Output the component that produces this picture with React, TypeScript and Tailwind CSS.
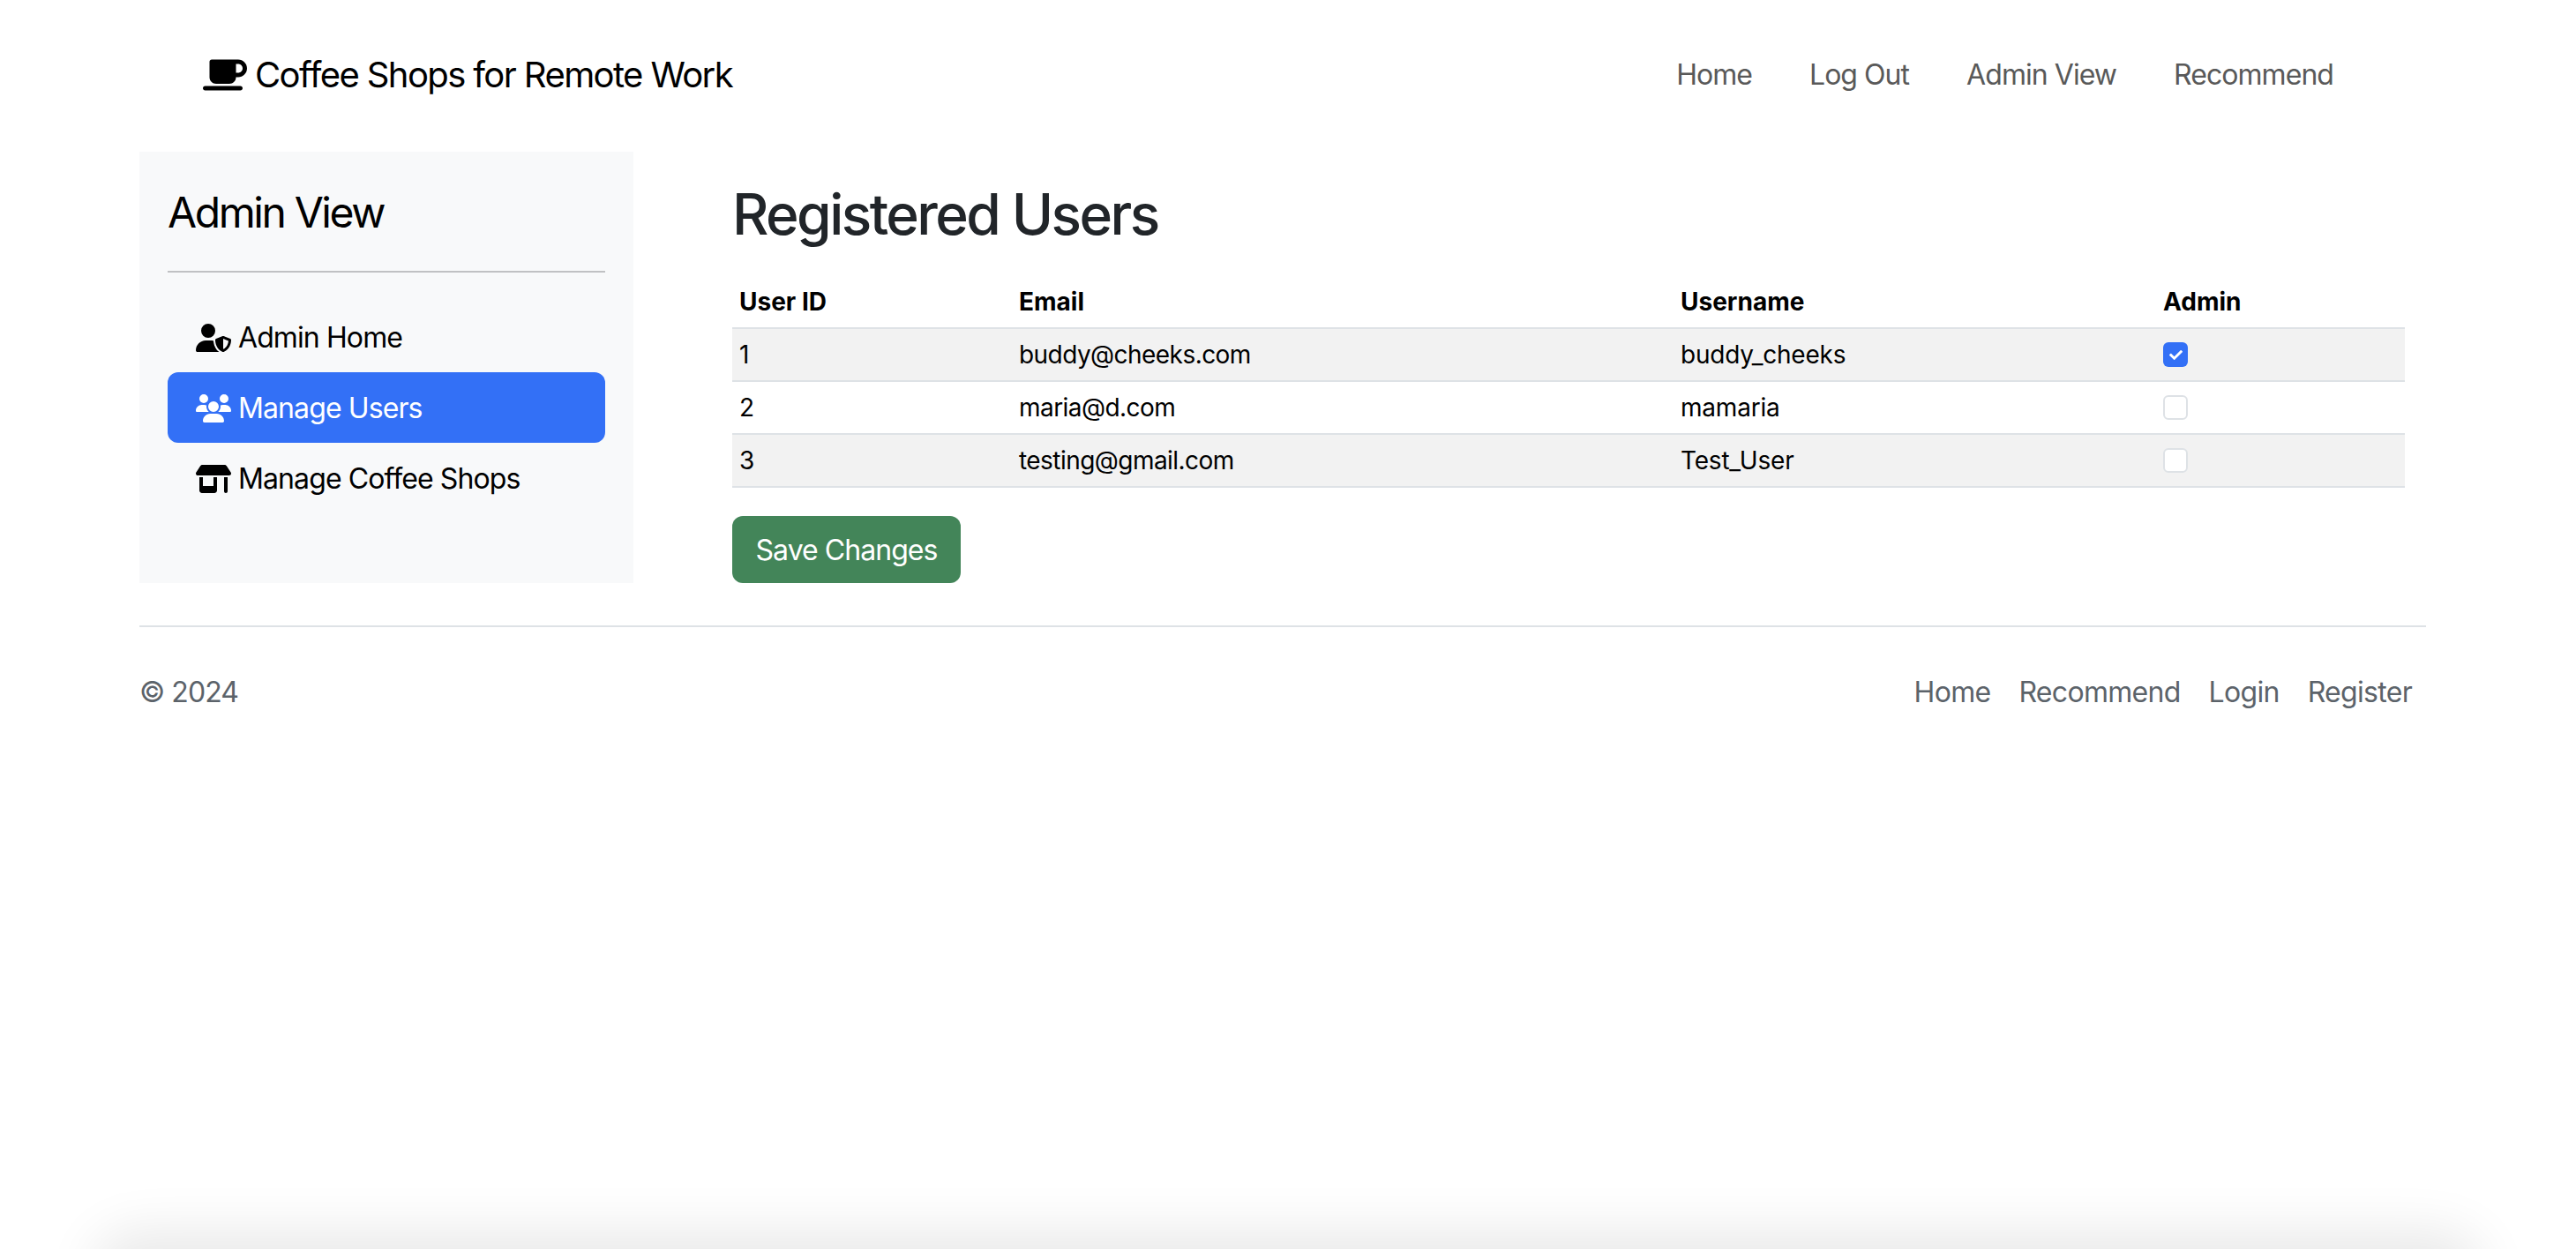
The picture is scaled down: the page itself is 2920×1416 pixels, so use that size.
import { FaMugSaucer, FaShop, FaUsers, FaUserShield } from "react-icons/fa6"
import { FaCheck } from "react-icons/fa"

const users = [
  { id: 1, email: "buddy@cheeks.com", username: "buddy_cheeks", admin: true },
  { id: 2, email: "maria@d.com", username: "mamaria", admin: false },
  { id: 3, email: "testing@gmail.com", username: "Test_User", admin: false },
]

export default function App() {
  return (
    <div className="relative h-[1416px] overflow-hidden bg-white font-['Inter',sans-serif] text-[32px] leading-[48px] tracking-[-0.95px] text-black">
      {/* Top nav */}
      <header className="flex h-[172px] items-center justify-between pb-[3px] pl-[230px] pr-[275px]">
        <div className="flex items-center gap-[9px] text-[40px] tracking-[-1.6px]">
          <FaMugSaucer className="h-[40px] w-[50px]" />
          <span>Coffee Shops for Remote Work</span>
        </div>
        <nav className="flex gap-[65px] text-[#595959]">
          <a>Home</a>
          <a>Log Out</a>
          <a>Admin View</a>
          <a>Recommend</a>
        </nav>
      </header>

      <main className="flex pl-[158px]">
        {/* Sidebar */}
        <aside className="flex h-[489px] w-[560px] flex-col bg-[#f8f9fa] px-[32px] pt-[32px] tracking-[-0.9px]">
          <h4 className="text-[48px] leading-[74px] tracking-[-2.4px]">Admin View</h4>
          <hr className="mb-[33px] mt-[29px] border-t-2 border-[#c0c1c3]" />
          <a className="flex h-[80px] items-center gap-[8px] px-[32px] pt-[2px]">
            <FaUserShield className="h-[32px] w-[40px]" />
            Admin Home
          </a>
          <a className="flex h-[80px] items-center gap-[8px] rounded-[12px] bg-[#3370f6] px-[32px] pt-[2px] text-white">
            <FaUsers className="h-[32px] w-[40px]" />
            Manage Users
          </a>
          <a className="flex h-[80px] items-center gap-[8px] px-[32px] pt-[2px]">
            <FaShop className="h-[32px] w-[40px]" />
            Manage Coffee Shops
          </a>
        </aside>

        {/* Users table */}
        <section className="ml-[112px] w-[1896px]">
          <h2 className="pt-[32px] text-[64px] font-medium leading-[77px] tracking-[-2.56px] text-[#212529]">Registered Users</h2>
          <form className="mt-[32px]">
            <table className="w-full table-fixed border-collapse text-[28px] leading-[42px]">
              <thead>
                <tr className="h-[59px] border-b-2 border-[#dee2e6] text-left tracking-normal">
                  <th className="w-[317px] px-[8px] font-bold">User ID</th>
                  <th className="w-[750px] px-[8px] font-bold">Email</th>
                  <th className="w-[547px] px-[8px] font-bold">Username</th>
                  <th className="px-[8px] font-bold">Admin</th>
                </tr>
              </thead>
              <tbody>
                {users.map((u) => (
                  <tr key={u.id} className="h-[60px] border-b-2 border-[#dee2e6] odd:bg-[#f2f2f2]">
                    <td className="px-[8px]">{u.id}</td>
                    <td className="px-[8px] tracking-[-0.55px]">{u.email}</td>
                    <td className="px-[8px] tracking-[-0.2px]">{u.username}</td>
                    <td className="px-[8px]">
                      {u.admin ? (
                        <span className="flex h-[28px] w-[28px] items-center justify-center rounded-[6px] bg-[#3370f6] text-white">
                          <FaCheck className="h-[15px] w-[15px]" />
                        </span>
                      ) : (
                        <span className="block h-[28px] w-[28px] rounded-[6px] border-2 border-[#dee2e6] bg-white" />
                      )}
                    </td>
                  </tr>
                ))}
              </tbody>
            </table>
            <button type="button" className="mt-[32px] h-[76px] w-[259px] rounded-[12px] bg-[#438559] pt-[1px] text-white">
              Save Changes
            </button>
          </form>
        </section>
      </main>

      {/* Footer */}
      <footer className="ml-[158px] mt-[48px] flex h-[150px] w-[2592px] items-center justify-between border-t-2 border-[#dee2e6] pb-[1px] text-[#5c636a]">
        <span>© 2024</span>
        <nav className="flex gap-[32px] pr-[16px] tracking-[-0.7px]">
          <a>Home</a>
          <a>Recommend</a>
          <a>Login</a>
          <a>Register</a>
        </nav>
      </footer>

      {/* Soft window shadow rising from below the page */}
      <div className="pointer-events-none absolute bottom-[-60px] left-[125px] h-[60px] w-[2670px] rounded-[40px] shadow-[0_0_60px_20px_rgba(0,0,0,0.09)]" />
    </div>
  )
}
